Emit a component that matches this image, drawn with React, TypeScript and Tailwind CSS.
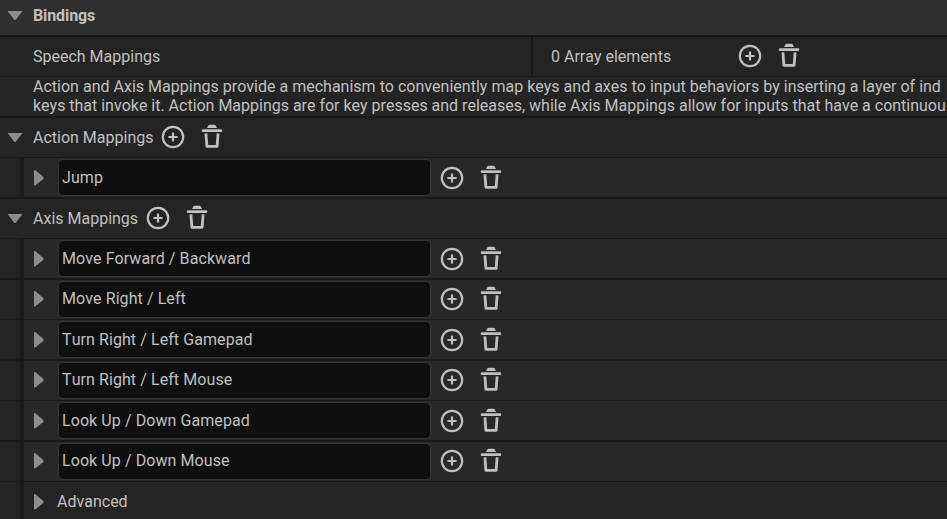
import type { ReactNode } from "react";

function PlusIcon() {
  return (
    <svg width="24" height="25" viewBox="0 0 24 25" fill="none" stroke="#c0c0c0" className="shrink-0">
      <circle cx="12" cy="13" r="10.2" strokeWidth="2.2" />
      <path d="M12 8.4v9.2M7.4 13h9.2" strokeWidth="2.2" />
    </svg>
  );
}

function TrashIcon() {
  return (
    <svg width="22" height="25" viewBox="0 0 22 25" className="shrink-0">
      <path d="M6 4L7.6 1.2q0.3-0.5 0.9-0.5h5q0.6 0 0.9 0.5L16 4z" fill="#c0c0c0" />
      <path d="M2.1 6.7h17.8" stroke="#c0c0c0" strokeWidth="2.8" strokeLinecap="round" />
      <path
        d="M4.9 9.4L5.9 22.3h10.2L17.1 9.4"
        fill="none"
        stroke="#c0c0c0"
        strokeWidth="2.8"
        strokeLinejoin="round"
      />
    </svg>
  );
}

function Actions() {
  return (
    <div className="flex items-center gap-4">
      <PlusIcon />
      <TrashIcon />
    </div>
  );
}

function DownArrow() {
  return (
    <svg width="16" height="10" viewBox="0 0 16 10" className="ml-[7px] mr-[10px] shrink-0">
      <path d="M0.5 0h15L9 8.4q-1 1-2 0z" fill="#8c8c8c" />
    </svg>
  );
}

function RightArrow() {
  return (
    <svg width="10" height="17" viewBox="0 0 10 17" className="ml-[10px] shrink-0">
      <path d="M0 1L1.5 1.2L9.3 8q0.7 1 0 2L1.5 16.3L0 16.5z" fill="#8c8c8c" />
    </svg>
  );
}

function Row({ thick = false, children }: { thick?: boolean; children: ReactNode }) {
  return (
    <div
      className={`flex shrink-0 items-center bg-[#242424] border-[#191919] ${
        thick ? "h-[41px] border-b-2" : "h-10 border-b"
      }`}
    >
      {children}
    </div>
  );
}

function Gutter() {
  return (
    <div className="flex w-6 shrink-0 self-stretch">
      <div className="w-4" />
      <div className="w-1 bg-[#202020]" />
      <div className="w-1 bg-[#1a1a1a]" />
    </div>
  );
}

function MappingRow({ name, thick }: { name: string; thick: boolean }) {
  const lift = thick ? "" : "pb-[2px]";
  return (
    <Row thick={thick}>
      <Gutter />
      <div className="flex flex-1 items-center self-stretch bg-[#282828]">
        <div className={lift}>
          <RightArrow />
        </div>
        <div
          className={`ml-[14px] flex h-[37px] w-[373px] items-center rounded-[5px] border border-[#333333] bg-[#0f0f0f] pl-[3px] ${lift}`}
        >
          <span className="tracking-[0.08px]">{name}</span>
        </div>
        <div className={`ml-[9px] ${lift}`}>
          <Actions />
        </div>
      </div>
    </Row>
  );
}

const axisMappings = [
  "Move Forward / Backward",
  "Move Right / Left",
  "Turn Right / Left Gamepad",
  "Turn Right / Left Mouse",
  "Look Up / Down Gamepad",
  "Look Up / Down Mouse",
];

export default function App() {
  return (
    <div className="flex h-[519px] w-[947px] flex-col overflow-hidden whitespace-nowrap bg-[#242424] font-[Roboto,sans-serif] text-[16px] leading-[19px] text-[#c0c0c0] [font-kerning:none]">
      <div className="flex h-[37px] shrink-0 items-center border-b-2 border-[#191919] bg-[#2f2f2f] pb-1">
        <DownArrow />
        <span className="font-bold tracking-[-0.1px]">Bindings</span>
      </div>
      <Row>
        <div className="w-[533px] self-stretch border-r-2 border-[#191919] pl-[33px] pt-[10px]">Speech Mappings</div>
        <span className="w-[205px] pl-[18px]">0 Array elements</span>
        <div className="pb-[2px]">
          <Actions />
        </div>
      </Row>
      <Row thick>
        <div className="pb-[2px] pl-[33px]">
          <p className="tracking-[0.01px]">Action and Axis Mappings provide a mechanism to conveniently map keys and axes to input behaviors by inserting a layer of ind</p>
          <p className="tracking-[-0.01px]">keys that invoke it. Action Mappings are for key presses and releases, while Axis Mappings allow for inputs that have a continuou</p>
        </div>
      </Row>
      <Row>
        <DownArrow />
        <span className="w-32">Action Mappings</span>
        <div className="pb-[2px]">
          <Actions />
        </div>
      </Row>
      <MappingRow name="Jump" thick />
      <Row>
        <DownArrow />
        <span className="w-[113px]">Axis Mappings</span>
        <div className="pb-[2px]">
          <Actions />
        </div>
      </Row>
      {axisMappings.map((name, i) => (
        <MappingRow key={name} name={name} thick={i % 2 === 0} />
      ))}
      <Row>
        <Gutter />
        <RightArrow />
        <span className="ml-[13px]">Advanced</span>
      </Row>
    </div>
  );
}
